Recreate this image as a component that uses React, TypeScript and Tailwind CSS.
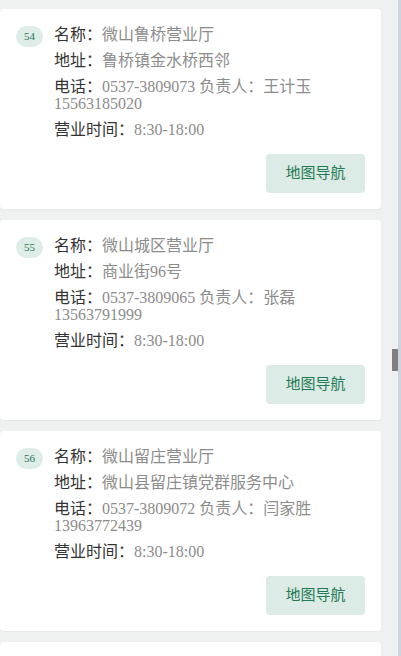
const halls = [
  { no: 54, name: "微山鲁桥营业厅", addr: "鲁桥镇金水桥西邻", tel: "0537-3809073", owner: "王计玉", mobile: "15563185020", hours: "8:30-18:00" },
  { no: 55, name: "微山城区营业厅", addr: "商业街96号", tel: "0537-3809065", owner: "张磊", mobile: "13563791999", hours: "8:30-18:00" },
  { no: 56, name: "微山留庄营业厅", addr: "微山县留庄镇党群服务中心", tel: "0537-3809072", owner: "闫家胜", mobile: "13963772439", hours: "8:30-18:00" },
];

type Hall = (typeof halls)[number];

function HallCard({ hall }: { hall: Hall }) {
  return (
    <div className="shrink-0 rounded-[4px] bg-white px-4 pt-[17px] pb-4 shadow-[0_1px_2px_rgba(0,0,0,0.04)]">
      <div className="flex">
        <div className="mr-[11px] flex h-[21px] w-[27px] shrink-0 items-center justify-center rounded-full bg-[#deede7] text-[11px] text-[#1f7450]">
          {hall.no}
        </div>
        <div className="flex flex-1 flex-col gap-[9px] text-[16px] leading-[17px] text-[#8c8c8c]">
          <p><span className="text-[#333]">名称：</span>{hall.name}</p>
          <p><span className="text-[#333]">地址：</span>{hall.addr}</p>
          <p>
            <span className="text-[#333]">电话：</span>
            {hall.tel} 负责人：{hall.owner} {hall.mobile}
          </p>
          <p><span className="text-[#333]">营业时间：</span>{hall.hours}</p>
        </div>
      </div>
      <div className="mt-4 flex justify-end">
        <button className="h-[39px] w-[99px] rounded-[4px] bg-[#dcebe5] text-[15px] text-[#1f7a55]">
          地图导航
        </button>
      </div>
    </div>
  );
}

export default function App() {
  return (
    <div className="flex h-[656px] w-[401px] overflow-hidden bg-[#eff1f0] font-['Liberation_Serif','Noto_Sans_CJK_SC',serif]">
      <div className="relative flex flex-1 flex-col gap-[11px] pt-[9px] pr-[17px]">
        {halls.map((h) => (
          <HallCard key={h.no} hall={h} />
        ))}
        {/* next card, scrolled below the fold */}
        <div className="h-[200px] shrink-0 rounded-[4px] bg-white shadow-[0_1px_2px_rgba(0,0,0,0.04)]" />
        <div className="absolute top-[349px] right-0 h-[22px] w-[6px] bg-[#7f7f7f]" />
      </div>
      <div className="w-[3px] bg-[#ccd4de]" />
    </div>
  );
}
